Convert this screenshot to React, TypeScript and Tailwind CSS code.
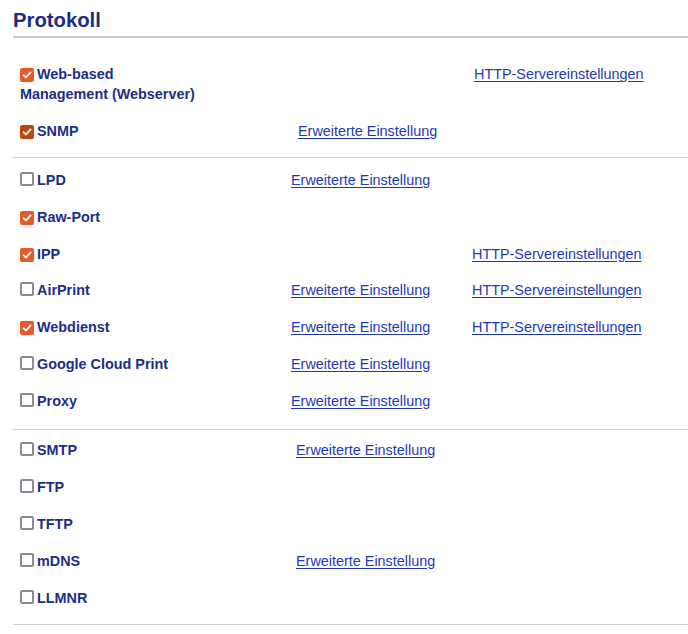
import React from "react";

type Row = {
  label: React.ReactNode;
  checked?: boolean;
  focused?: boolean;
  advanced?: boolean;
  http?: boolean;
};

const sections: { cols: string; pad: string; rows: Row[] }[] = [
  {
    cols: "grid-cols-[278px_176px_1fr]",
    pad: "pb-[7px]",
    rows: [
      {
        label: (
          <>
            Web-based
            <br />
            Management (Webserver)
          </>
        ),
        checked: true,
        http: true,
      },
      { label: "SNMP", checked: true, focused: true, advanced: true },
    ],
  },
  {
    cols: "grid-cols-[271px_181px_1fr]",
    pad: "pt-[4px] pb-[10px]",
    rows: [
      { label: "LPD", advanced: true },
      { label: "Raw-Port", checked: true },
      { label: "IPP", checked: true, http: true },
      { label: "AirPrint", advanced: true, http: true },
      { label: "Webdienst", checked: true, advanced: true, http: true },
      { label: "Google Cloud Print", advanced: true },
      { label: "Proxy", advanced: true },
    ],
  },
  {
    cols: "grid-cols-[276px_181px_1fr]",
    pad: "pt-[2px] pb-[8px]",
    rows: [
      { label: "SMTP", advanced: true },
      { label: "FTP" },
      { label: "TFTP" },
      { label: "mDNS", advanced: true },
      { label: "LLMNR" },
    ],
  },
];

function Box({ checked, focused }: { checked?: boolean; focused?: boolean }) {
  if (!checked) {
    return (
      <span className="inline-block w-[14px] h-[14px] mr-[3px] align-[-1px] rounded-[2px] border-2 border-[#8b8a96] bg-white" />
    );
  }
  return (
    <span
      className={`inline-flex items-center justify-center w-[14px] h-[14px] mr-[3px] align-[-1px] rounded-[2px] ${
        focused ? "bg-[#c4440f]" : "bg-[#e9582b]"
      }`}
    >
      <svg width="10" height="10" viewBox="0 0 10 10">
        <path d="M1.6 5.2 L4 7.5 L8.6 2.4" fill="none" stroke="#fff" strokeWidth="1.8" strokeLinecap="round" strokeLinejoin="round" />
      </svg>
    </span>
  );
}

function Link({ children }: { children: React.ReactNode }) {
  return <a className="text-[#1d39b4] underline underline-offset-[2px] font-normal cursor-pointer">{children}</a>;
}

export default function App() {
  return (
    <div
      className="min-h-screen bg-white pl-[13px] pt-[6px]"
      style={{ fontFamily: '"Liberation Sans", Arial, sans-serif' }}
    >
      <h1 className="text-[20.3px] leading-[28px] font-bold text-[#1c2c80] pb-[2px] border-b-2 border-[#cbcbcb]">
        Protokoll
      </h1>
      <div className="pt-[18px]">
        {sections.map((s, i) => (
          <div key={i} className={`border-b border-[#cfcfcf] ${s.pad}`}>
            {s.rows.map((r, j) => (
              <div key={j} className={`grid ${s.cols} pl-[7px] py-[8.4px] text-[14.4px] leading-[20px]`}>
                <div className="font-bold text-[#1b2f86]">
                  <Box checked={r.checked} focused={r.focused} />
                  {r.label}
                </div>
                <div>{r.advanced && <Link>Erweiterte Einstellung</Link>}</div>
                <div>{r.http && <Link>HTTP-Servereinstellungen</Link>}</div>
              </div>
            ))}
          </div>
        ))}
      </div>
    </div>
  );
}
